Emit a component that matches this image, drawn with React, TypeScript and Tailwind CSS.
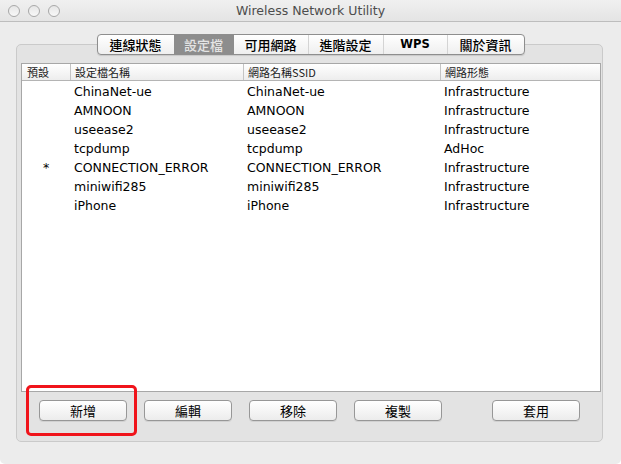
const tabs = [
  { label: "連線狀態", w: "w-[76px]" },
  { label: "設定檔", w: "w-[60px]", active: true },
  { label: "可用網路", w: "w-[74px]" },
  { label: "進階設定", w: "w-[75px]" },
  { label: "WPS", w: "w-[64px]" },
  { label: "關於資訊", w: "w-[77px]" },
];

const rows = [
  { def: "", name: "ChinaNet-ue", ssid: "ChinaNet-ue", mode: "Infrastructure" },
  { def: "", name: "AMNOON", ssid: "AMNOON", mode: "Infrastructure" },
  { def: "", name: "useease2", ssid: "useease2", mode: "Infrastructure" },
  { def: "", name: "tcpdump", ssid: "tcpdump", mode: "AdHoc" },
  { def: "*", name: "CONNECTION_ERROR", ssid: "CONNECTION_ERROR", mode: "Infrastructure" },
  { def: "", name: "miniwifi285", ssid: "miniwifi285", mode: "Infrastructure" },
  { def: "", name: "iPhone", ssid: "iPhone", mode: "Infrastructure" },
];

const cjk = "font-['Noto_Sans_CJK_TC','Noto_Sans',sans-serif]";
const latin = "font-['DejaVu_Sans','Noto_Sans_CJK_TC',sans-serif]";

const Btn = ({ label, className = "" }: { label: string; className?: string }) => (
  <button
    className={`h-[21px] w-[88px] rounded-[4px] border border-[#979797] bg-gradient-to-b from-white to-[#ececec] text-[13px] leading-none text-black shadow-[0_1px_0_rgba(0,0,0,0.08)] ${cjk} ${className}`}
  >
    {label}
  </button>
);

export default function App() {
  return (
    <div className="relative flex h-[464px] w-[621px] flex-col overflow-hidden rounded-b-[5px] bg-[#ececec]">
      {/* Title bar */}
      <div className="relative flex h-[22px] shrink-0 items-center justify-center border-b border-[#bdbdbd] bg-gradient-to-b from-[#f0f0f0] to-[#e4e4e4] pt-[2px]">
        <div className="absolute left-[8px] top-[5px] flex gap-[8px]">
          {[0, 1, 2].map((i) => (
            <span
              key={i}
              className="h-[12px] w-[12px] rounded-full border border-[#a8a8a8] bg-gradient-to-b from-[#e6e6e6] to-[#f8f8f8]"
            />
          ))}
        </div>
        <span className={`text-[12.5px] text-[#4d4d4d] ${latin}`}>Wireless Network Utility</span>
      </div>

      {/* Tabs */}
      <div className="relative z-10 mt-[12px] flex justify-center">
        <div className="flex h-[21px] overflow-hidden rounded-[4px] border border-[#8e8e8e] bg-gradient-to-b from-white to-[#efefef] shadow-[0_1px_1px_rgba(0,0,0,0.12)]">
          {tabs.map((t, i) => (
            <div
              key={t.label}
              className={`flex items-center justify-center ${t.w} ${
                t.active ? "bg-[#8d8d8d] text-[#e4e4e4]" : "text-black"
              } ${i > 0 && !t.active && !tabs[i - 1].active ? "border-l border-[#d4d4d4]" : ""} ${
                t.label === "WPS" ? `font-bold ${latin} text-[11.5px]` : `font-medium text-[13px] ${cjk}`
              }`}
            >
              {t.label}
            </div>
          ))}
        </div>
      </div>

      {/* Group box */}
      <div className="mx-[16px] -mt-[11px] flex h-[398px] w-[587px] flex-col rounded-[5px] border border-[#cacaca] bg-[#e3e3e3]">
        <div className="ml-[4px] mr-[1px] mt-[18px] flex h-[329px] flex-col border border-[#a7a7a7] bg-white">
          <div className="flex h-[17px] shrink-0 items-center border-b border-[#b4b4b4] bg-gradient-to-b from-white to-[#ededed] text-[11px] text-[#1a1a1a]">
            <div className={`w-[48px] pl-[5px] ${cjk}`}>預設</div>
            <div className={`w-[173px] border-l border-[#c4c4c4] pl-[4px] ${cjk}`}>設定檔名稱</div>
            <div className={`w-[197px] border-l border-[#c4c4c4] pl-[4px] ${cjk}`}>網路名稱SSID</div>
            <div className={`flex-1 border-l border-[#c4c4c4] pl-[4px] ${cjk}`}>網路形態</div>
          </div>
          <div className={`flex flex-col pt-[2px] text-[12.5px] text-black ${latin}`}>
            {rows.map((r) => (
              <div key={r.name} className="flex h-[19px] items-center">
                <div className="w-[48px] text-center">{r.def}</div>
                <div className="w-[173px] pl-[4px]">{r.name}</div>
                <div className="w-[197px] pl-[4px]">{r.ssid}</div>
                <div className="flex-1 pl-[4px]">{r.mode}</div>
              </div>
            ))}
          </div>
        </div>

        <div className="ml-[22px] mt-[8px] flex">
          <Btn label="新增" />
          <Btn label="編輯" className="ml-[17px]" />
          <Btn label="移除" className="ml-[17px]" />
          <Btn label="複製" className="ml-[17px]" />
          <Btn label="套用" className="ml-[50px]" />
        </div>
      </div>

      {/* Highlight */}
      <div className="pointer-events-none absolute left-[26px] top-[385px] h-[51px] w-[111px] rounded-[5px] border-[3px] border-[#f0141b]" />
    </div>
  );
}
